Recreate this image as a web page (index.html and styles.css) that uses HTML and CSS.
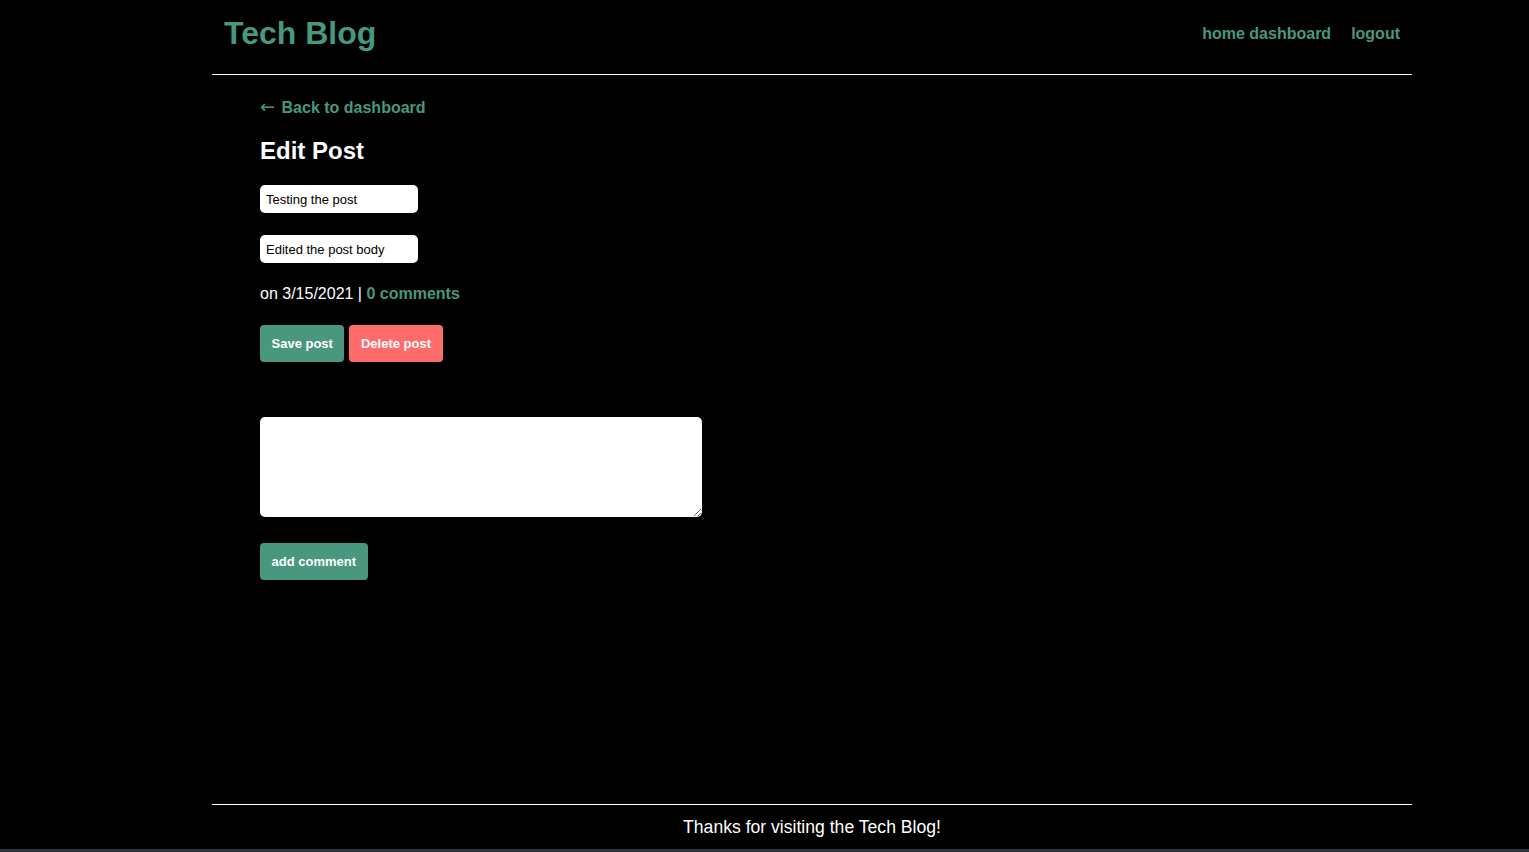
FILE: index.html
```html
<!DOCTYPE html>
<html lang="en">
<head>
<meta charset="utf-8">
<title>Tech Blog</title>
<link rel="stylesheet" href="styles.css">
</head>
<body>
<div class="page">
  <header class="site-header">
    <h1 class="brand">Tech Blog</h1>
    <nav class="nav">
      <a class="nav-link" href="#">home dashboard</a>
      <a class="nav-link" href="#">logout</a>
    </nav>
  </header>
  <main class="main">
    <a class="back-link" href="#"><span class="arrow">&larr;</span> Back to dashboard</a>
    <h2 class="title">Edit Post</h2>
    <form class="edit-form">
      <input class="field" type="text" value="Testing the post">
      <input class="field" type="text" value="Edited the post body">
      <p class="meta">on 3/15/2021 | <a class="meta-link" href="#">0 comments</a></p>
      <div class="actions">
        <button class="btn btn-green" type="button">Save post</button>
        <button class="btn btn-red" type="button">Delete post</button>
      </div>
    </form>
    <form class="comment-form">
      <textarea class="comment-box"></textarea>
      <button class="btn btn-green" type="button">add comment</button>
    </form>
  </main>
  <footer class="site-footer">Thanks for visiting the Tech Blog!</footer>
</div>
</body>
</html>
```
FILE: styles.css
```css
html {
  background: #2f333a;
}
body {
  margin: 0;
  background: #000;
  color: #fff;
  font-family: "Liberation Sans", Arial, sans-serif;
  min-height: 849px;
}
.page {
  width: 1200px;
  margin-left: 212px;
  min-height: 849px;
  display: flex;
  flex-direction: column;
}
.site-header {
  height: 74px;
  border-bottom: 1px solid #fff;
  display: flex;
  justify-content: space-between;
  align-items: flex-start;
  padding: 0 12px;
}
.brand {
  margin: 15px 0 0;
  font-size: 32px;
  font-weight: bold;
  line-height: normal;
  color: #48977e;
}
.nav {
  margin-top: 25px;
  display: flex;
  gap: 20px;
}
.nav-link {
  color: #48977e;
  font-weight: bold;
  font-size: 16px;
  text-decoration: none;
}
.main {
  flex: 1;
  padding: 23px 48px 0;
  display: flex;
  flex-direction: column;
  align-items: flex-start;
}
.back-link {
  color: #48977e;
  font-weight: bold;
  font-size: 16px;
  text-decoration: none;
}
.arrow {
  font-family: "DejaVu Sans", sans-serif;
  font-weight: normal;
  font-size: 18px;
  line-height: 1;
  margin-right: 2px;
}
.title {
  margin: 20px 0 0;
  font-size: 24px;
  font-weight: bold;
  line-height: normal;
}
.edit-form {
  display: flex;
  flex-direction: column;
  align-items: flex-start;
  margin-top: 20px;
}
.field {
  width: 158px;
  height: 28px;
  box-sizing: border-box;
  border: none;
  border-radius: 5px;
  padding: 0 6px;
  font-family: "Liberation Sans", Arial, sans-serif;
  font-size: 13px;
  color: #000;
  background: #fff;
  margin-bottom: 22px;
}
.meta {
  margin: 0;
  font-size: 16px;
}
.meta-link {
  color: #48977e;
  font-weight: bold;
  text-decoration: none;
}
.actions {
  display: flex;
  gap: 5px;
  margin-top: 22px;
}
.btn {
  height: 37px;
  padding: 0 11.5px;
  border: none;
  border-radius: 4px;
  color: #fff;
  font-family: "Liberation Sans", Arial, sans-serif;
  font-size: 13px;
  font-weight: bold;
  cursor: pointer;
}
.btn-green {
  background: #48977e;
}
.btn-red {
  background: #ff6b6b;
}
.comment-form {
  display: flex;
  flex-direction: column;
  align-items: flex-start;
  margin-top: 55px;
}
.comment-box {
  width: 442px;
  height: 100px;
  box-sizing: border-box;
  border: none;
  border-radius: 5px;
  background: #fff;
  margin: 0 0 26px;
  display: block;
}
.site-footer {
  border-top: 1px solid #fff;
  padding: 12px 0 11px;
  text-align: center;
  font-size: 17.6px;
}
```
